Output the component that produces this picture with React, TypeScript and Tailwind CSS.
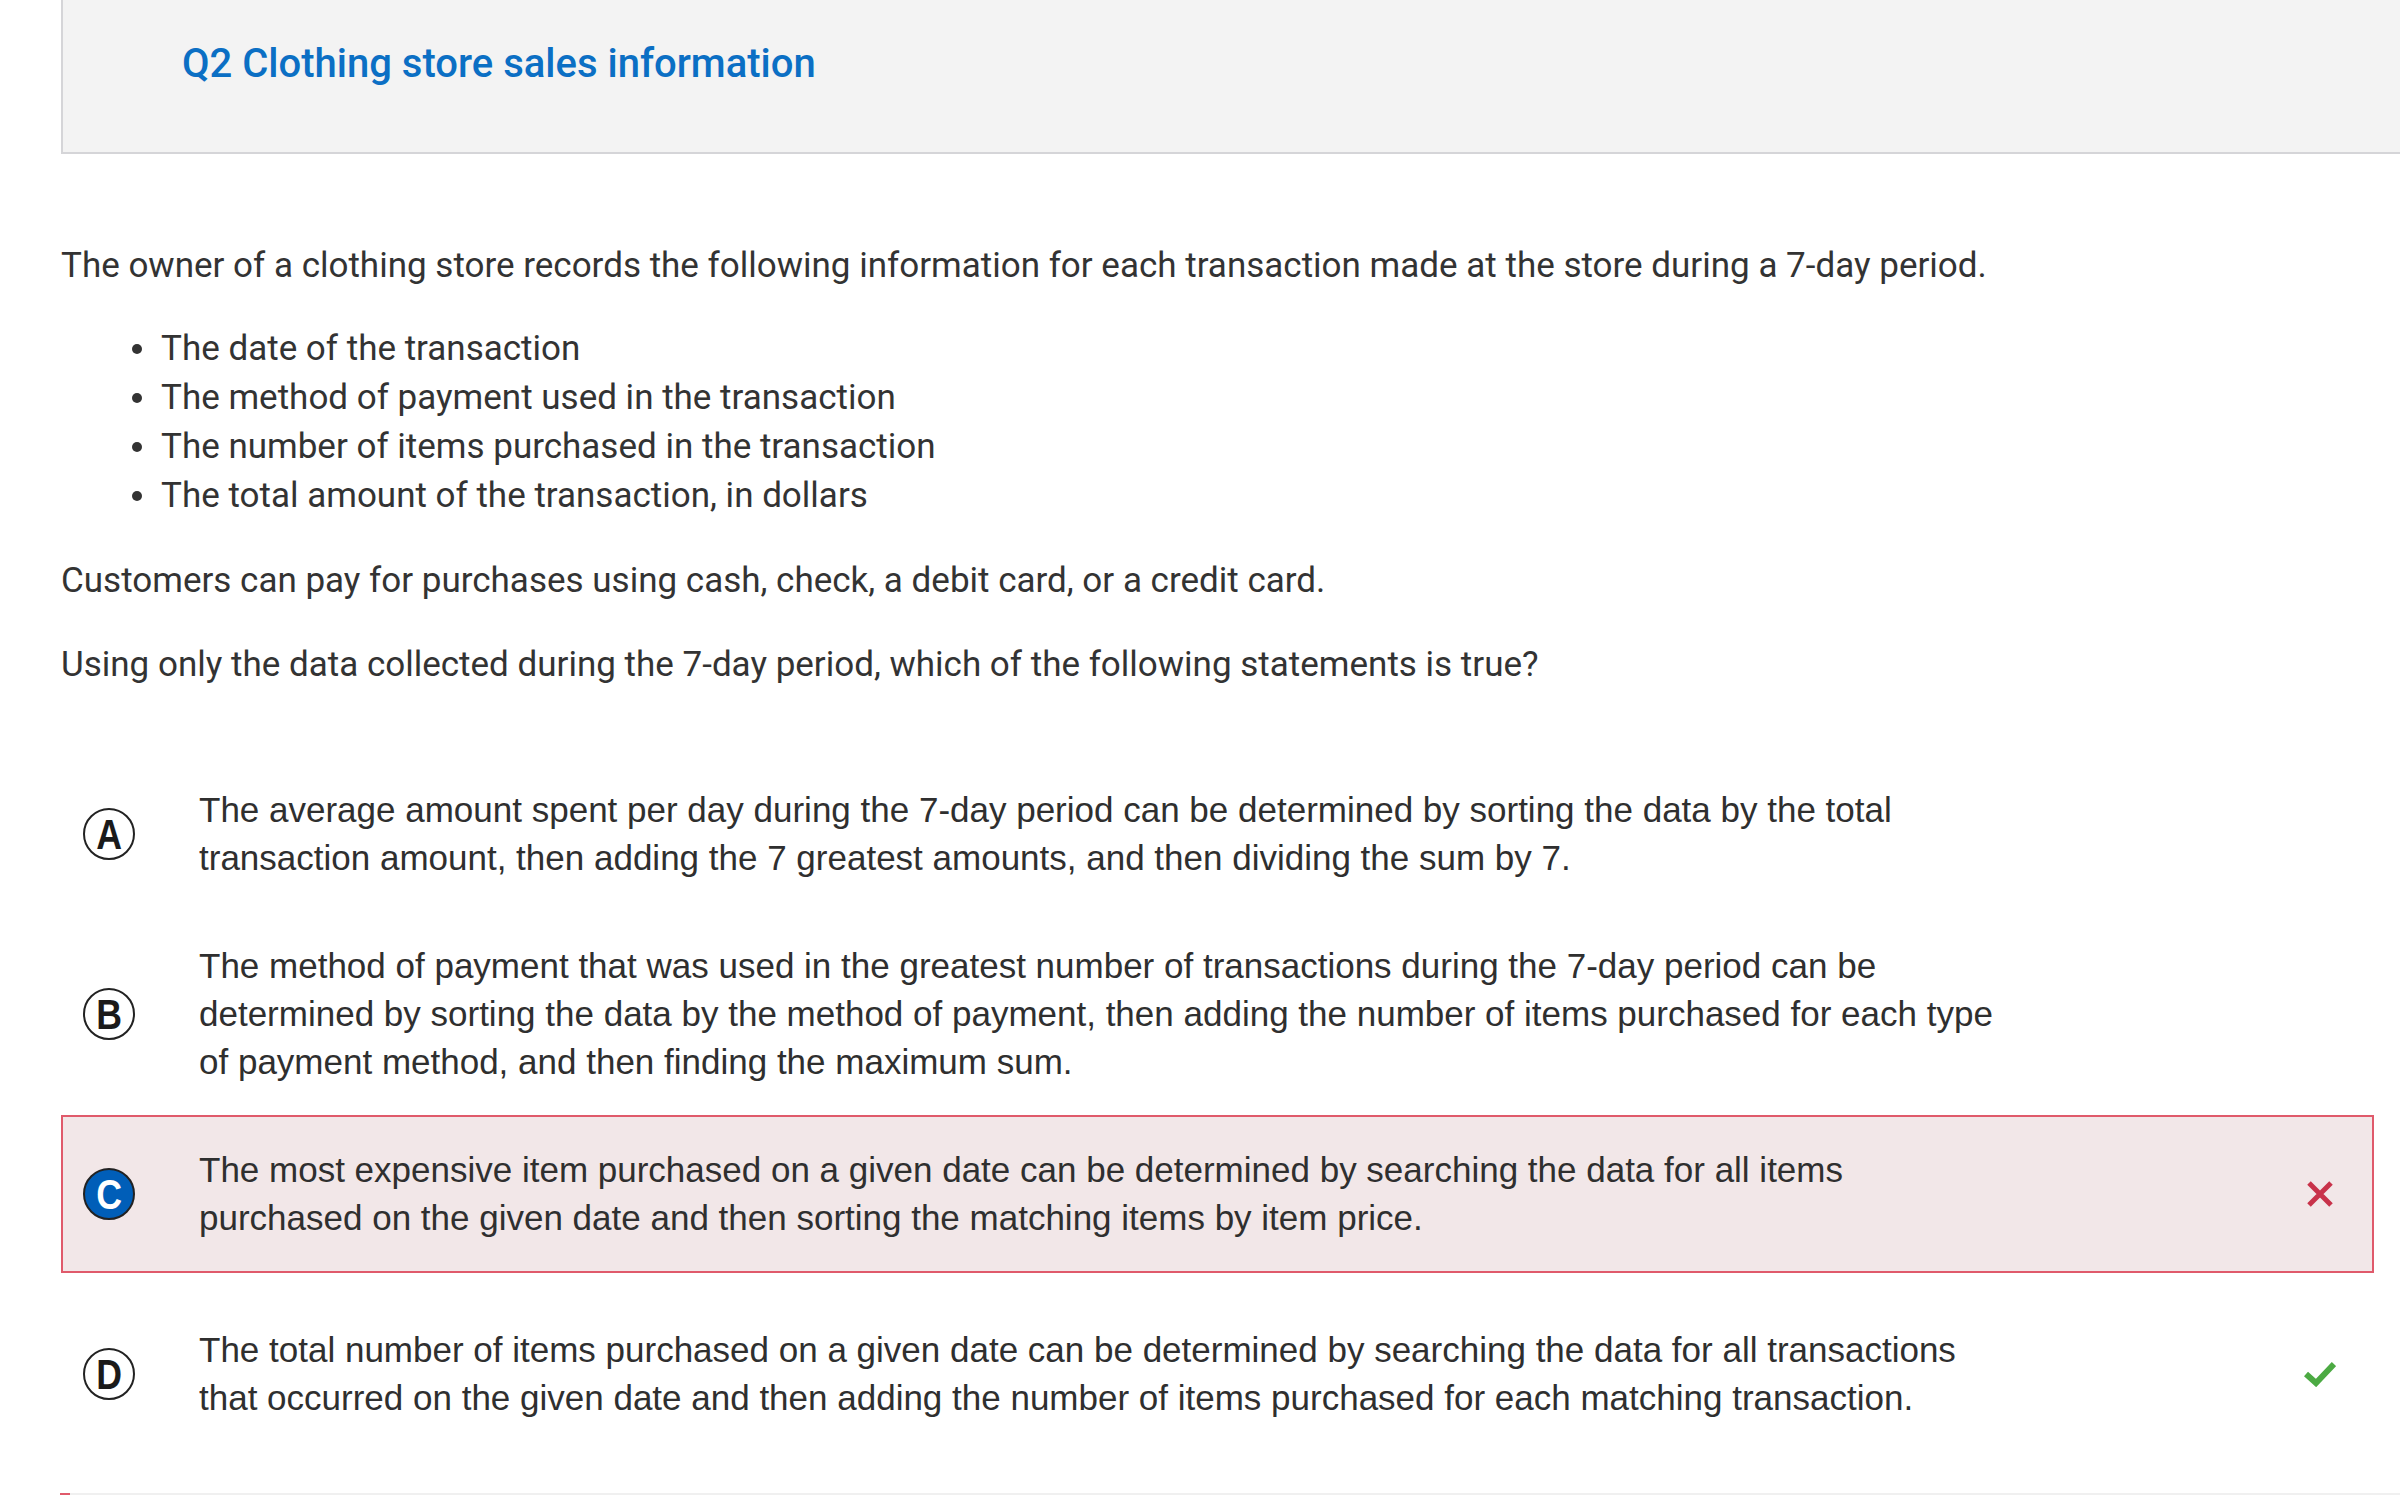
import React from 'react';

type Choice = {
  letter: string;
  text: string;
  state?: 'wrong' | 'right';
};

const CHOICES: Choice[] = [
  {
    letter: 'A',
    text: 'The average amount spent per day during the 7-day period can be determined by sorting the data by the total transaction amount, then adding the 7 greatest amounts, and then dividing the sum by 7.',
  },
  {
    letter: 'B',
    text: 'The method of payment that was used in the greatest number of transactions during the 7-day period can be determined by sorting the data by the method of payment, then adding the number of items purchased for each type of payment method, and then finding the maximum sum.',
  },
  {
    letter: 'C',
    text: 'The most expensive item purchased on a given date can be determined by searching the data for all items purchased on the given date and then sorting the matching items by item price.',
    state: 'wrong',
  },
  {
    letter: 'D',
    text: 'The total number of items purchased on a given date can be determined by searching the data for all transactions that occurred on the given date and then adding the number of items purchased for each matching transaction.',
    state: 'right',
  },
];

const BULLETS = [
  'The date of the transaction',
  'The method of payment used in the transaction',
  'The number of items purchased in the transaction',
  'The total amount of the transaction, in dollars',
];

const rowMargins = ['mt-[66px]', 'mt-[-2px]', 'mt-[-2px]', 'mt-[22px]'];

const LetterBadge: React.FC<{ letter: string; selected: boolean }> = ({ letter, selected }) => (
  <div
    className={`w-[52px] h-[52px] shrink-0 rounded-full border-2 border-[#222] flex items-center justify-center font-['Liberation_Sans',Arial,sans-serif] font-bold text-[42px] leading-none ${
      selected ? 'bg-[#005eb8] text-white' : 'bg-white text-[#1a1a1a]'
    }`}
  >
    <span className="scale-x-[0.85] inline-block translate-y-[1px]">{letter}</span>
  </div>
);

const WrongIcon = () => (
  <svg width="28" height="28" viewBox="0 0 28 28" className="block">
    <path d="M3 3 L25 25 M25 3 L3 25" stroke="#c8324a" strokeWidth="5" fill="none" />
  </svg>
);

const RightIcon = () => (
  <svg width="32" height="26" viewBox="0 0 32 26" className="block">
    <path d="M2 13 L12 22 L30 3" stroke="#4caa43" strokeWidth="6" fill="none" />
  </svg>
);

export default function App() {
  return (
    <div className="min-h-screen bg-white font-['Roboto',sans-serif] text-[#333]">
      {/* Question header */}
      <div className="ml-[61px] h-[154px] bg-[#f3f3f3] border-l-2 border-b-2 border-[#d5d5d8] pl-[119px] pt-[40px]">
        <h1 className="text-[40px] leading-[48px] font-medium text-[#0b6fc4]">Q2 Clothing store sales information</h1>
      </div>

      {/* Stem */}
      <div className="pl-[61px] text-[35px] leading-[49px] text-[#333]">
        <p className="mt-[87px]">
          The owner of a clothing store records the following information for each transaction made at the store during a 7-day period.
        </p>
        <ul className="mt-[34px]">
          {BULLETS.map(b => (
            <li key={b} className="flex items-center">
              <span className="ml-[71px] w-[10px] h-[10px] rounded-full bg-[#333] shrink-0" />
              <span className="ml-[19px]">{b}</span>
            </li>
          ))}
        </ul>
        <p className="mt-[36px]">Customers can pay for purchases using cash, check, a debit card, or a credit card.</p>
        <p className="mt-[35px]">Using only the data collected during the 7-day period, which of the following statements is true?</p>
      </div>

      {/* Answer choices */}
      <div className="ml-[61px] w-[2313px]">
        {CHOICES.map((c, i) => (
          <div
            key={c.letter}
            className={`${rowMargins[i]} flex items-center border-2 py-[29px] ${
              c.state === 'wrong' ? 'border-[#e05a6b] bg-[#f2e7e8]' : 'border-transparent'
            }`}
          >
            <div className="ml-[20px]">
              <LetterBadge letter={c.letter} selected={c.state === 'wrong'} />
            </div>
            <p className="ml-[64px] w-[1805px] font-['Liberation_Sans',Arial,sans-serif] text-[35px] leading-[48px] text-[#2f2f2f]">
              {c.text}
            </p>
            <div className="ml-auto mr-[36px] w-[32px] flex justify-center">
              {c.state === 'wrong' && <WrongIcon />}
              {c.state === 'right' && <RightIcon />}
            </div>
          </div>
        ))}
      </div>

      {/* Progress bar */}
      <div className="mt-[40px] ml-[60px] h-[2px] bg-[#f0f0f0] flex">
        <div className="w-[10px] h-full bg-[#e05a6b]" />
      </div>
    </div>
  );
}
